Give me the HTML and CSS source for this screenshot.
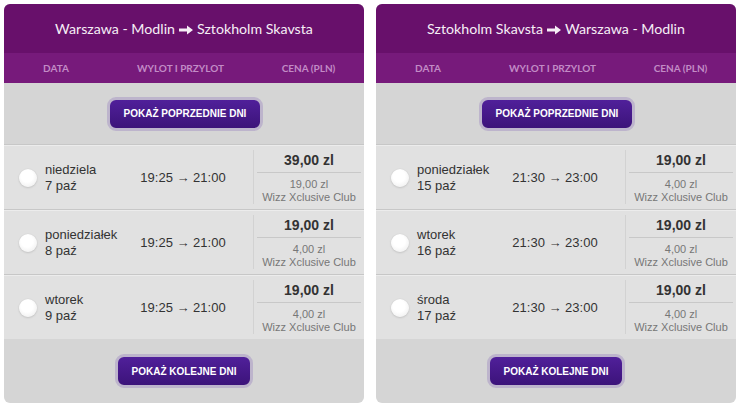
FILE: index.html
```html
<!DOCTYPE html>
<html lang="pl">
<head>
  <meta charset="UTF-8">
  <title>Loty</title>
  <link rel="stylesheet" href="styles.css">
</head>
<body>
  <div class="wrap">

    <div class="panel">
      <div class="title">Warszawa - Modlin<svg class="arr" width="14" height="10" viewBox="0 0 14 10"><path d="M0 3.6h8V0.5L14 5l-6 4.5V6.4H0z" fill="currentColor"/></svg>Sztokholm Skavsta</div>
      <div class="cols">
        <div>DATA</div><div>WYLOT I PRZYLOT</div><div>CENA (PLN)</div>
      </div>
      <div class="more"><button class="btn">POKAŻ POPRZEDNIE DNI</button></div>

      <div class="row">
        <div class="day"><span class="radio"></span><div>niedziela<br>7 paź</div></div>
        <div class="time">19:25 &rarr; 21:00</div>
        <div class="price"><b>39,00 zl</b><small>19,00 zl<br>Wizz Xclusive Club</small></div>
      </div>
      <div class="row">
        <div class="day"><span class="radio"></span><div>poniedziałek<br>8 paź</div></div>
        <div class="time">19:25 &rarr; 21:00</div>
        <div class="price"><b>19,00 zl</b><small>4,00 zl<br>Wizz Xclusive Club</small></div>
      </div>
      <div class="row">
        <div class="day"><span class="radio"></span><div>wtorek<br>9 paź</div></div>
        <div class="time">19:25 &rarr; 21:00</div>
        <div class="price"><b>19,00 zl</b><small>4,00 zl<br>Wizz Xclusive Club</small></div>
      </div>

      <div class="more last"><button class="btn next">POKAŻ KOLEJNE DNI</button></div>
    </div>

    <div class="panel">
      <div class="title">Sztokholm Skavsta<svg class="arr" width="14" height="10" viewBox="0 0 14 10"><path d="M0 3.6h8V0.5L14 5l-6 4.5V6.4H0z" fill="currentColor"/></svg>Warszawa - Modlin</div>
      <div class="cols">
        <div>DATA</div><div>WYLOT I PRZYLOT</div><div>CENA (PLN)</div>
      </div>
      <div class="more"><button class="btn">POKAŻ POPRZEDNIE DNI</button></div>

      <div class="row">
        <div class="day"><span class="radio"></span><div>poniedziałek<br>15 paź</div></div>
        <div class="time">21:30 &rarr; 23:00</div>
        <div class="price"><b>19,00 zl</b><small>4,00 zl<br>Wizz Xclusive Club</small></div>
      </div>
      <div class="row">
        <div class="day"><span class="radio"></span><div>wtorek<br>16 paź</div></div>
        <div class="time">21:30 &rarr; 23:00</div>
        <div class="price"><b>19,00 zl</b><small>4,00 zl<br>Wizz Xclusive Club</small></div>
      </div>
      <div class="row">
        <div class="day"><span class="radio"></span><div>środa<br>17 paź</div></div>
        <div class="time">21:30 &rarr; 23:00</div>
        <div class="price"><b>19,00 zl</b><small>4,00 zl<br>Wizz Xclusive Club</small></div>
      </div>

      <div class="more last"><button class="btn next">POKAŻ KOLEJNE DNI</button></div>
    </div>

  </div>
</body>
</html>
```

FILE: styles.css
```css
body {
  margin: 0;
  background: #fff;
  font-family: "Liberation Sans", Arial, sans-serif;
  color: #333;
}

.wrap {
  display: flex;
  gap: 12px;
  padding: 4px;
}

.panel {
  width: 360px;
  height: 399px;
  background: #d5d5d5;
  border-radius: 6px;
  overflow: hidden;
  display: flex;
  flex-direction: column;
}

.title {
  height: 49px;
  line-height: 50px;
  background: #68106b;
  color: #f6eef6;
  text-align: center;
  font-family: "Lato", sans-serif;
  font-size: 14.2px;
}

.title .arr {
  margin: 0 4px;
  vertical-align: -0.5px;
}

.cols {
  height: 30px;
  background: #771a7b;
  display: grid;
  grid-template-columns: 104px 145px 111px;
  align-items: center;
  text-align: center;
  font-family: "Lato", sans-serif;
  font-size: 10px;
  font-weight: bold;
  color: #c28bc6;
}

.more {
  height: 61px;
  display: flex;
  align-items: center;
  justify-content: center;
}

.more.last {
  flex: 1;
  height: auto;
}

.btn {
  border: 3px solid #bdb4cc;
  border-radius: 9px;
  background: linear-gradient(#50209a, #3c137a);
  color: #fff;
  font-family: "Liberation Sans", Arial, sans-serif;
  font-size: 10px;
  font-weight: bold;
  height: 34px;
  padding: 0 14px;
  margin-left: 2px;
}

.btn.next {
  margin-left: 0;
  padding: 0 13px;
}

.row {
  height: 64px;
  background: #e1e1e1;
  border-top: 1px solid #c7c7c7;
  box-shadow: inset 0 1px 0 #ececec;
  display: grid;
  grid-template-columns: 104px 145px 111px;
  align-items: center;
  font-size: 13px;
}

.day {
  display: flex;
  align-items: center;
  line-height: 16px;
  white-space: nowrap;
}

.radio {
  flex-shrink: 0;
  width: 18px;
  height: 18px;
  border-radius: 50%;
  margin: 0 8px 0 15px;
  background: radial-gradient(circle at 45% 40%, #fff 40%, #e9e9e9 100%);
  box-shadow: 0 0 1px #bbb, 0 1px 2px #c6c6c6;
}

.time {
  text-align: center;
  padding-left: 5px;
}

.price {
  align-self: stretch;
  margin: 5px 0 6px;
  border-left: 1px solid #d2d2d2;
  padding: 0 3px 0 3px;
  text-align: center;
  display: flex;
  flex-direction: column;
}

.price b {
  font-size: 14px;
  line-height: 15px;
  padding: 3px 0 4px;
  border-bottom: 1px solid #c8c8c8;
}

.price small {
  font-size: 11px;
  line-height: 13px;
  color: #777;
  padding-top: 5px;
}
```
